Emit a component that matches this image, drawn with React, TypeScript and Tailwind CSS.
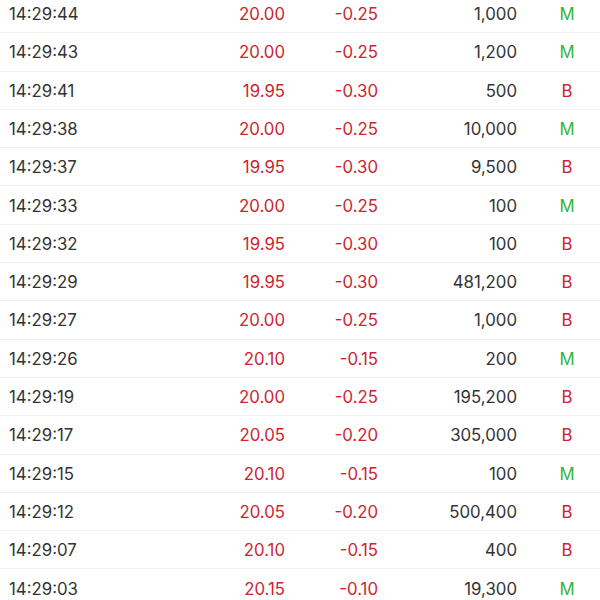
import React from 'react';

type Trade = {
  time: string;
  price: string;
  change: string;
  volume: string;
  side: 'M' | 'B';
};

const trades: Trade[] = [
  { time: '14:29:44', price: '20.00', change: '-0.25', volume: '1,000', side: 'M' },
  { time: '14:29:43', price: '20.00', change: '-0.25', volume: '1,200', side: 'M' },
  { time: '14:29:41', price: '19.95', change: '-0.30', volume: '500', side: 'B' },
  { time: '14:29:38', price: '20.00', change: '-0.25', volume: '10,000', side: 'M' },
  { time: '14:29:37', price: '19.95', change: '-0.30', volume: '9,500', side: 'B' },
  { time: '14:29:33', price: '20.00', change: '-0.25', volume: '100', side: 'M' },
  { time: '14:29:32', price: '19.95', change: '-0.30', volume: '100', side: 'B' },
  { time: '14:29:29', price: '19.95', change: '-0.30', volume: '481,200', side: 'B' },
  { time: '14:29:27', price: '20.00', change: '-0.25', volume: '1,000', side: 'B' },
  { time: '14:29:26', price: '20.10', change: '-0.15', volume: '200', side: 'M' },
  { time: '14:29:19', price: '20.00', change: '-0.25', volume: '195,200', side: 'B' },
  { time: '14:29:17', price: '20.05', change: '-0.20', volume: '305,000', side: 'B' },
  { time: '14:29:15', price: '20.10', change: '-0.15', volume: '100', side: 'M' },
  { time: '14:29:12', price: '20.05', change: '-0.20', volume: '500,400', side: 'B' },
  { time: '14:29:07', price: '20.10', change: '-0.15', volume: '400', side: 'B' },
  { time: '14:29:03', price: '20.15', change: '-0.10', volume: '19,300', side: 'M' },
];

export default function App() {
  return (
    <div className="w-[600px] h-[600px] overflow-hidden bg-white font-['Inter',sans-serif] text-[16.8px]">
      <div className="-mt-[5px]">
        {trades.map((t, i) => (
          <div
            key={i}
            className="flex items-center h-[38.3px] pl-[9px] pt-[2px] border-b border-[#f1f1f1]"
          >
            <div className="w-[196px] text-[#333333]">{t.time}</div>
            <div className="w-[80px] text-right text-[#cc2530]">{t.price}</div>
            <div className="w-[93px] text-right text-[#cc2530]">{t.change}</div>
            <div className="w-[139px] text-right text-[#333333]">{t.volume}</div>
            <div
              className={`ml-[25px] w-[50px] text-center ${t.side === 'M' ? 'text-[#35b536]' : 'text-[#cc2530]'}`}
            >
              {t.side}
            </div>
          </div>
        ))}
      </div>
    </div>
  );
}
